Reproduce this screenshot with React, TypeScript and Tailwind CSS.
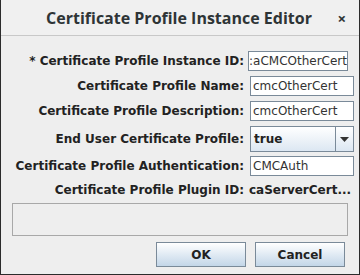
import React from 'react';

const labelCls = 'w-[243px] shrink-0 text-right font-bold text-[12px] text-[#222222] whitespace-nowrap';
const fieldCls =
  'h-[20px] bg-white border border-[#7a8a99] flex items-center px-[2px] text-[12px] text-[#333333] overflow-hidden whitespace-nowrap';

const Row: React.FC<{ label: string; children: React.ReactNode; className?: string }> = ({ label, children, className }) => (
  <div className={`flex items-center ${className ?? ''}`}>
    <div className={labelCls}>{label}</div>
    {children}
  </div>
);

export default function App() {
  return (
    <div className="w-[360px] h-[275px] bg-[#eeeeee] flex flex-col border-x border-b border-[#2b2b2b]" style={{ fontFamily: '"DejaVu Sans", sans-serif' }}>
      {/* title bar */}
      <div className="h-[36px] shrink-0 flex items-center justify-center relative bg-[#f0f0f0] border-b border-[#c8c8c8]">
        <span className="text-[16px] font-bold text-[#2e3436] ml-[-2px]" style={{ fontFamily: '"Open Sans", sans-serif' }}>
          Certificate Profile Instance Editor
        </span>
        <span className="absolute right-[13px] top-[7px] text-[15px] font-bold text-[#2e3436]" style={{ fontFamily: '"Open Sans", sans-serif' }}>
          ×
        </span>
      </div>

      {/* form */}
      <div className="flex flex-col pt-[15px]">
        <Row label="* Certificate Profile Instance ID:">
          <div className={`${fieldCls} ml-[4px] w-[100px] !px-0`}>:aCMCOtherCert</div>
        </Row>
        <Row label="Certificate Profile Name:" className="mt-[5px]">
          <div className={`${fieldCls} ml-[6px] w-[104px]`}>cmcOtherCert</div>
        </Row>
        <Row label="Certificate Profile Description:" className="mt-[5px]">
          <div className={`${fieldCls} ml-[6px] w-[104px]`}>cmcOtherCert</div>
        </Row>
        <Row label="End User Certificate Profile:" className="mt-[5px]">
          <div className="ml-[6px] w-[104px] h-[26px] flex border border-[#7a8a99] bg-gradient-to-b from-[#ffffff] to-[#dce7f2]">
            <div className="flex-1 flex items-center px-[3px] font-bold text-[12px] text-[#222222]">true</div>
            <div className="w-[18px] border-l border-[#7a8a99] flex items-center justify-center">
              <svg width="9" height="5" viewBox="0 0 9 5">
                <path d="M0 0H9L4.5 5Z" fill="#333333" />
              </svg>
            </div>
          </div>
        </Row>
        <Row label="Certificate Profile Authentication:" className="mt-[4px]">
          <div className={`${fieldCls} ml-[6px] w-[104px]`}>CMCAuth</div>
        </Row>
        <Row label="Certificate Profile Plugin ID:" className="mt-[6px] h-[16px]">
          <div className="ml-[5px] font-bold text-[12px] text-[#222222] whitespace-nowrap">caServerCert...</div>
        </Row>
      </div>

      <div className="mt-[5px] ml-[11px] w-[336px] h-[33px] border border-[#a8a8a8] bg-[#eeeeee]" />

      <div className="mt-[6px] flex justify-end gap-[9px] pr-[14px]">
        <button className="w-[90px] h-[25px] border border-[#7a8a99] bg-gradient-to-b from-[#ffffff] to-[#c3d6e8] font-bold text-[12px] text-[#222222]">
          OK
        </button>
        <button className="w-[90px] h-[25px] border border-[#7a8a99] bg-gradient-to-b from-[#ffffff] to-[#c3d6e8] font-bold text-[12px] text-[#222222]">
          Cancel
        </button>
      </div>
    </div>
  );
}
